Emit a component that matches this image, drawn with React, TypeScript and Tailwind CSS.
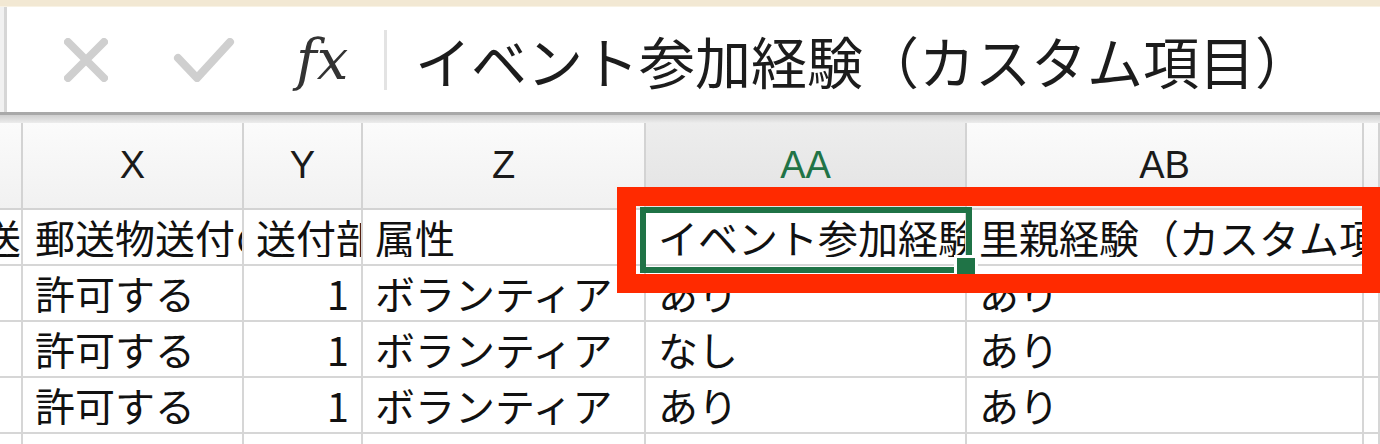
import React from 'react'

const cols = [
  { key: 'w', width: 'w-[23px]' },
  { key: 'X', width: 'w-[221px]' },
  { key: 'Y', width: 'w-[119px]' },
  { key: 'Z', width: 'w-[283px]' },
  { key: 'AA', width: 'w-[321px]' },
  { key: 'AB', width: 'w-[397px]' },
  { key: 'AC', width: 'w-[16px]' }
]

const rows = [
  ['送', '郵送物送付の可否', '送付部数', '属性', 'イベント参加経験（カスタム項目）', '里親経験（カスタム項目）', ''],
  ['', '許可する', '1', 'ボランティア', 'あり', 'あり', ''],
  ['', '許可する', '1', 'ボランティア', 'なし', 'あり', ''],
  ['', '許可する', '1', 'ボランティア', 'あり', 'あり', ''],
  ['', '', '', '', '', '', '']
]

const FormulaBar = () => (
  <div className="flex h-[105px] items-center bg-white">
    {/* left gutter */}
    <div className="h-full w-[7px] shrink-0 border-r-[3px] border-[#d6d6d6] bg-[#f1f1f1]" />
    <svg className="ml-[57px] h-[44px] w-[44px] shrink-0" viewBox="0 0 44 44" fill="none">
      <path d="M4 4 L40 40 M40 4 L4 40" stroke="#cfcfcf" strokeWidth={8} strokeLinecap="round" />
    </svg>
    <svg className="ml-[64px] h-[44px] w-[64px] shrink-0" viewBox="0 0 64 44" fill="none">
      <path d="M6 20 L25 40 L58 4" stroke="#cfcfcf" strokeWidth={8} strokeLinecap="round" strokeLinejoin="round" />
    </svg>
    <span className="ml-[60px] w-[62px] shrink-0 font-['DejaVu_Serif',serif] text-[56px] italic leading-none text-[#333]">
      fx
    </span>
    <div className="ml-[26px] h-[60px] w-[3px] shrink-0 bg-[#e3e3e3]" />
    <div className="ml-[28px] whitespace-nowrap font-['Noto_Sans_CJK_JP',sans-serif] text-[56px] leading-none text-[#1c1c1c]">
      イベント参加経験（カスタム項目）
    </div>
  </div>
)

const HeaderRow = () => (
  <div className="flex h-[87px]">
    {cols.map((c) => (
      <div
        key={c.key}
        className={`${c.width} flex shrink-0 items-center justify-center border-r-2 border-b-2 border-[#d3d3d3] font-['Liberation_Sans',sans-serif] text-[38px] ${
          c.key === 'AA'
            ? 'bg-linear-to-b from-[#ededed] to-[#e3e3e3] text-[#217346]'
            : 'bg-linear-to-b from-[#fbfbfb] to-[#f1f1f1] text-[#1a1a1a]'
        }`}
      >
        {c.key === 'w' || c.key === 'AC' ? '' : c.key}
      </div>
    ))}
  </div>
)

const App: React.FC = () => {
  return (
    <div className="relative h-[444px] w-[1380px] overflow-hidden bg-white">
      {/* window top strip */}
      <div className="h-[7px] border-b border-[#f8f2e4] bg-[#f2e8d3]" />
      <FormulaBar />
      {/* divider between formula bar and sheet */}
      <div className="h-[11px] border-t-[3px] border-[#a9a9a9] bg-linear-to-b from-[#cfcfcf] to-[#ececec]" />
      <HeaderRow />

      {/* Cells */}
      {rows.map((row, ri) => (
        <div key={ri} className="flex h-[56px]">
          {cols.map((c, ci) => {
            const value = row[ci]
            const isNumber = c.key === 'Y' && value === '1'
            return (
              <div
                key={c.key}
                className={`${c.width} flex shrink-0 items-center overflow-hidden whitespace-nowrap border-r-2 border-b-2 border-[#d6d6d6] font-['Noto_Sans_CJK_JP',sans-serif] text-[40px] leading-none text-[#111] ${
                  c.key === 'w' ? 'justify-end' : isNumber ? 'justify-end pr-[12px]' : 'pl-[12px]'
                }`}
              >
                <span className={`min-w-0 overflow-hidden ${c.key === 'w' ? '[direction:rtl]' : ''}`}>{value}</span>
              </div>
            )
          })}
        </div>
      ))}

      {/* selected cell (AA) */}
      <div className="absolute left-[640px] top-[207px] h-[66px] w-[332px] border-[6px] border-[#1f7346]" />
      <div className="absolute left-[954px] top-[255px] h-[23px] w-[24px] border-[3px] border-white bg-[#1f7346]" />

      {/* annotation */}
      <div className="absolute left-[617px] top-[187px] h-[106px] w-[764px] border-[19px] border-[#ff2a00]" />
    </div>
  )
}

export default App
